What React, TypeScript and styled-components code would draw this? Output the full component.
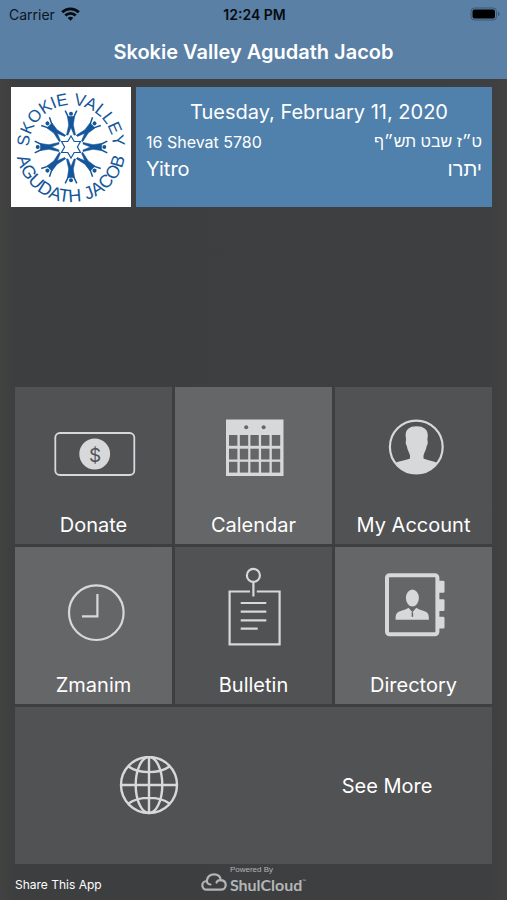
import React from 'react';
import styled, { createGlobalStyle } from 'styled-components';

const sans = 'Inter, "Open Sans", "Liberation Sans", sans-serif';
const ink = '#d7d8da';

const GlobalStyle = createGlobalStyle`
  *, *::before, *::after { box-sizing: border-box; }
  body { margin: 0; background: #3e3f40; }
  button { font: inherit; color: inherit; border: 0; margin: 0; cursor: pointer; }
`;

const Screen = styled.div`
  display: flex;
  flex-direction: column;
  min-height: 100vh;
  font-family: ${sans};
  color: #fff;
  background: linear-gradient(90deg, #424241 0, #3d3e40 16px, #3e3f40 calc(100% - 16px), #434343 100%);
`;

const Header = styled.header`
  background: #5a80a5;
  height: 79px;
`;

const StatusBar = styled.div`
  display: grid;
  grid-template-columns: 1fr auto 1fr;
  align-items: center;
  height: 28px;
  padding: 0 7px 0 9px;
  color: #0c1620;
`;

const Carrier = styled.div`
  display: flex;
  align-items: center;
  gap: 6px;
  font-size: 14px;
`;

const Time = styled.time`
  font-size: 14px;
  font-weight: 600;
  color: #060b10;
`;

const Battery = styled.svg`
  justify-self: end;
`;

const Title = styled.h1`
  margin: 0;
  text-align: center;
  font-size: 20px;
  font-weight: 600;
  line-height: 48px;
`;

const Main = styled.main`
  flex: 1;
  display: flex;
  flex-direction: column;
  padding: 8px 15px 0 11px;
`;

const Banner = styled.section`
  display: flex;
  gap: 5px;
`;

const LogoCard = styled.div`
  flex: none;
  width: 120px;
  height: 120px;
  background: #fff;
`;

const DateCard = styled.div`
  flex: 1;
  padding: 9px 10px;
  background: #5081ac;
`;

const Today = styled.div`
  padding-left: 10px;
  text-align: center;
  font-size: 20px;
  line-height: 32px;
`;

const DateRow = styled.div<{ $large?: boolean }>`
  display: flex;
  justify-content: space-between;
  font-size: ${p => (p.$large ? 20 : 16)}px;
  line-height: ${p => (p.$large ? 26 : 28)}px;
`;

const Hebrew = styled.span`
  font-family: "Liberation Sans", "DejaVu Sans", sans-serif;
`;

const Tiles = styled.nav`
  display: grid;
  grid-template-columns: repeat(3, 1fr);
  gap: 3px;
  margin-top: auto;
  margin-left: 4px;
`;

const Tile = styled.button<{ $light?: boolean }>`
  display: flex;
  flex-direction: column;
  align-items: center;
  height: 157px;
  padding: 12px 0 0;
  background: ${p => (p.$light ? '#656668' : '#515254')};
`;

const WideTile = styled.button`
  grid-column: 1 / -1;
  display: grid;
  grid-template-columns: 56% 44%;
  align-items: center;
  justify-items: center;
  height: 157px;
  padding: 0;
  background: #515254;
`;

const Label = styled.span`
  font-size: 20px;
  line-height: 28px;
  margin-top: 12px;
`;

const WideLabel = styled.span`
  font-size: 20px;
  line-height: 28px;
`;

const Footer = styled.footer`
  display: grid;
  grid-template-columns: 1fr auto 1fr;
  height: 36px;
  padding: 0 15px;
`;

const Share = styled.button`
  justify-self: start;
  padding: 5px 0 0;
  background: none;
  && { font-size: 12px; }
`;

const Brand = styled.div`
  display: flex;
  align-items: flex-end;
  align-self: start;
  gap: 3px;
  padding-top: 1px;
  color: #b4b5b7;
`;

const CloudMark = styled.svg`
  margin-bottom: 4px;
`;

const BrandText = styled.div`
  display: grid;
  font-family: "Liberation Sans", Arial, sans-serif;
`;

const Powered = styled.span`
  font-size: 8px;
  line-height: 10px;
`;

const BrandName = styled.span`
  display: flex;
  font-family: Lato, "Liberation Sans", sans-serif;
  font-size: 16px;
  font-weight: 700;
  line-height: 20px;
`;

const Mark = styled.span`
  font-size: 5px;
  font-weight: 400;
  line-height: 12px;
`;

const IconArt = ({ children }: { children: React.ReactNode }) => (
  <svg width="101" height="100" viewBox="0 0 101 100" fill="none" stroke={ink} strokeWidth="2.2" aria-hidden="true">
    {children}
  </svg>
);

const DonateIcon = () => (
  <IconArt>
    <rect x="12.3" y="34" width="79" height="42" rx="4.5" strokeWidth="1.8" />
    <circle cx="51.7" cy="55" r="15.4" fill={ink} stroke="none" />
    <text x="52.2" y="63" textAnchor="middle" fontFamily="Inter, sans-serif" fontSize="19" fill="#515254" stroke="none">$</text>
  </IconArt>
);

const CalendarIcon = () => (
  <IconArt>
    <rect x="23" y="20.5" width="57.5" height="56.5" fill={ink} stroke="none" />
    <g fill="#656668" stroke="none">
      {[36, 49.7, 62.8].map(y =>
        [26, 36.8, 47.4, 58.1, 68.8].map(x => <rect key={`${x}-${y}`} x={x} y={y} width="8.4" height="10.8" />)
      )}
      <circle cx="43.2" cy="28.3" r="2" />
      <circle cx="60.6" cy="28.3" r="2" />
    </g>
  </IconArt>
);

const AccountIcon = () => (
  <IconArt>
    <circle cx="53.3" cy="48" r="26.4" />
    <path
      fill={ink}
      stroke="none"
      d="M53.5 27.3c7.4 0 11.3 3.4 11.3 9.3 0 1.5-.4 3-.4 4.5.8 1.6.4 4.500-.7 6-.7 4.300-2.500 6.600-3.200 9.300v3c2.800 1.800 9.600 2 13.200 4.300A26.600 26.600 0 0 1 53.300 75a26.600 26.600 0 0 1-20.400-11.300c3.600-2.300 11.300-2.500 14.100-4.300v-3c-.7-2.700-2.500-5-3.200-9.300-1.100-1.500-1.500-4.400-.7-6 0-1.500-.5-3-.5-4.500 0-5.900 3.500-9.300 10.900-9.300z"
    />
  </IconArt>
);

const ClockIcon = () => (
  <IconArt>
    <circle cx="53.3" cy="53.7" r="27.3" />
    <path d="M54.4 35v22.3H39" />
  </IconArt>
);

const BulletinIcon = () => (
  <IconArt>
    <circle cx="50.4" cy="16.4" r="6.5" />
    <path d="M50.4 23v14.5M47 32.500H26.600v52.800h50V32.500H53.800" />
    <path d="M37.700 44h25.600M37.700 52.700h25.600M37.700 61.300h25.600M37.700 69.700h17" />
  </IconArt>
);

const DirectoryIcon = () => (
  <IconArt>
    <rect x="24" y="16.3" width="50.4" height="59" rx="2.5" strokeWidth="4" />
    <g fill={ink} stroke="none">
      <rect x="75" y="21.7" width="6.5" height="12" rx="1.2" />
      <rect x="75" y="40.2" width="6.5" height="11.8" rx="1.2" />
      <rect x="75" y="57.7" width="6.5" height="11.8" rx="1.2" />
      <ellipse cx="49.4" cy="39" rx="6.5" ry="8.6" />
      <path d="M45.5 48.7l3.9 4.500 3.900-4.500c2.200 2.200 6.500 2.500 9.400 4 2.300 1.200 3.200 3 3.200 8H32.600c0-5 .9-6.800 3.200-8 2.900-1.500 7.500-1.800 9.700-4z" />
    </g>
    <path d="M49.4 53.3v4.5" stroke="#656668" strokeWidth="1.5" />
  </IconArt>
);

const GlobeIcon = () => (
  <svg width="60" height="60" viewBox="0 0 60 60" fill="none" stroke={ink} strokeWidth="2.4" aria-hidden="true">
    <circle cx="30" cy="29" r="28" />
    <ellipse cx="30" cy="29" rx="13.3" ry="28" />
    <path d="M30 1v56M2 29h56M9.500 10.500C20 18 40 18 50.500 10.500M9.500 47.500C20 40 40 40 50.500 47.500" />
  </svg>
);

const SynagogueLogo = () => (
  <svg width="120" height="120" viewBox="0 0 120 120" role="img" aria-label="Skokie Valley Agudath Jacob">
    <defs>
      <path id="arc-top" d="M18 64V60a42 42 0 0 1 84 0V64" />
      <path id="arc-bottom" d="M5 60a55 55 0 0 0 110 0" />
      <g id="figure">
        <circle cx="0" cy="-33.3" r="2" stroke="none" />
        <path d="M-5.8-36.3L-2.5-29.5M5.8-36.3L2.5-29.5" fill="none" strokeWidth="1.5" />
        <path d="M-3.5-30.5h7L2.3-22l2.2 10h-1.500L0-19.500-3-12h-1.500L-2.300-22z" strokeWidth=".6" />
      </g>
    </defs>
    <g fill="#14569a" fontFamily='"Liberation Sans", Arial, sans-serif'>
      <text fontSize="17" textAnchor="middle"><textPath href="#arc-top" startOffset="50%">SKOKIE VALLEY</textPath></text>
      <text fontSize="18" textAnchor="middle"><textPath href="#arc-bottom" startOffset="50%">AGUDATH JACOB</textPath></text>
    </g>
    <g transform="translate(60 60)" fill="#14569a" stroke="#14569a">
      {[0, 45, 90, 135, 180, 225, 270, 315].map(a => <use key={a} href="#figure" transform={`rotate(${a})`} />)}
      <path
        d="M0-11L3.200-5.500H9.500L6.400 0 9.500 5.500H3.200L0 11-3.200 5.500H-9.500L-6.400 0-9.500-5.500H-3.200z"
        fill="none"
        strokeWidth="1.2"
      />
    </g>
  </svg>
);

const WifiIcon = () => (
  <svg width="19" height="14" viewBox="0 0 19 14" fill="none" stroke="#060b10" strokeWidth="2.8" aria-hidden="true">
    <path d="M1.200 5.200a11.800 11.800 0 0 1 16.600 0M4.300 8.600a7.400 7.400 0 0 1 10.400 0" />
    <path d="M9.500 13.800L6.700 11a4 4 0 0 1 5.600 0z" fill="#060b10" stroke="none" />
  </svg>
);

const CloudIcon = () => (
  <CloudMark width="26" height="18" viewBox="0 0 26 18" fill="none" stroke="currentColor" strokeWidth="2.2" strokeLinecap="round" aria-hidden="true">
    <path d="M9.500 11.500C6.800 11.500 5.500 9.500 6 7 6.700 3.500 9.500 1.300 13 1.300c4 0 6.500 2.500 6.800 6M15.500 9.500c1-2.300 3-2.600 4.500-2.300 2.800.3 4.700 2.300 4.700 4.800 0 2.800-2 4.700-4.800 4.700H5.700C3 16.700 1.300 14.800 1.300 12.300 1.300 9.800 3.200 8 6 8" />
  </CloudMark>
);

const tiles = [
  { label: 'Donate', Icon: DonateIcon },
  { label: 'Calendar', Icon: CalendarIcon },
  { label: 'My Account', Icon: AccountIcon },
  { label: 'Zmanim', Icon: ClockIcon },
  { label: 'Bulletin', Icon: BulletinIcon },
  { label: 'Directory', Icon: DirectoryIcon },
];

export default function App() {
  return (
    <Screen>
      <GlobalStyle />
      <Header>
        <StatusBar>
          <Carrier>Carrier <WifiIcon /></Carrier>
          <Time>12:24 PM</Time>
          <Battery width="30" height="14" viewBox="0 0 30 14" role="img" aria-label="Battery full">
            <rect x="1" y="1" width="25.5" height="12" rx="3.5" fill="none" stroke="#3b5873" />
            <rect x="2.5" y="2.5" width="22.5" height="9" rx="2" fill="#000" />
            <path d="M28 4.800c2 .6 2 3.800 0 4.400z" fill="#3b5873" />
          </Battery>
        </StatusBar>
        <Title>Skokie Valley Agudath Jacob</Title>
      </Header>
      <Main>
        <Banner>
          <LogoCard><SynagogueLogo /></LogoCard>
          <DateCard>
            <Today>Tuesday, February 11, 2020</Today>
            <DateRow>
              <span>16 Shevat 5780</span>
              <Hebrew lang="he" dir="rtl">ט״ז שבט תש״ף</Hebrew>
            </DateRow>
            <DateRow $large>
              <span>Yitro</span>
              <Hebrew lang="he" dir="rtl">יתרו</Hebrew>
            </DateRow>
          </DateCard>
        </Banner>
        <Tiles aria-label="Main menu">
          {tiles.map(({ label, Icon }, i) => (
            <Tile key={label} type="button" $light={i % 2 === 1}>
              <Icon />
              <Label>{label}</Label>
            </Tile>
          ))}
          <WideTile type="button">
            <GlobeIcon />
            <WideLabel>See More</WideLabel>
          </WideTile>
        </Tiles>
      </Main>
      <Footer>
        <Share type="button">Share This App</Share>
        <Brand>
          <CloudIcon />
          <BrandText>
            <Powered>Powered By</Powered>
            <BrandName>ShulCloud<Mark>™</Mark></BrandName>
          </BrandText>
        </Brand>
      </Footer>
    </Screen>
  );
}
